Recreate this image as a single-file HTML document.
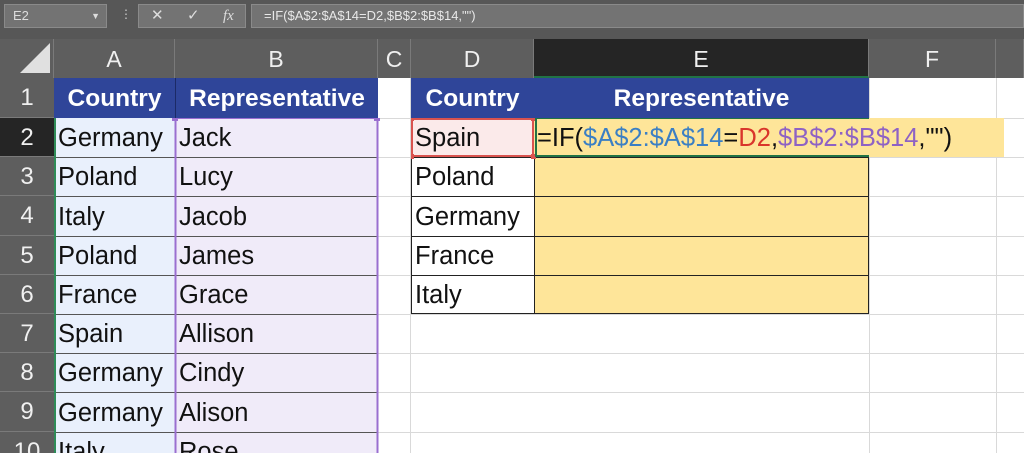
<!DOCTYPE html>
<html style="overflow:hidden;height:453px"><head><style>
*{margin:0;padding:0;box-sizing:border-box}
body{width:1024px;height:453px;overflow:hidden;background:#fff;font-family:"Liberation Sans",sans-serif;position:relative}
.a{position:absolute}
.t{font-size:25.5px;line-height:41px;padding-left:4px;color:#111;white-space:nowrap}
.ch{position:absolute;top:39px;height:39px;background:#5e5e5e;color:#f0f0f0;font-size:23px;text-align:center;line-height:41px;border-right:1px solid #7a7a7a}
.rh{position:absolute;left:0;width:54px;background:#5e5e5e;color:#f0f0f0;font-size:24px;text-align:center;line-height:39px;border-bottom:1px solid #7a7a7a}
.hd{background:#2f4599;color:#fff;font-weight:bold;text-align:center;font-size:24.5px;line-height:41px;white-space:nowrap}
</style></head><body>
<div class="a" style="left:0;top:0;width:1024px;height:39px;background:#575757"></div>
<div class="a" style="left:4px;top:4px;width:103px;height:24px;background:#737373;border:1px solid #8a8a8a;color:#ddd;font-size:13px;line-height:22px;padding-left:8px">E2<span style="position:absolute;right:6px;font-size:9px">▼</span></div>
<div class="a" style="left:120px;top:7px;color:#ccc;font-size:12px">⋮</div>
<div class="a" style="left:138px;top:4px;width:108px;height:24px;background:#737373;border:1px solid #8a8a8a;color:#ddd;font-size:15px;line-height:22px"><span style="position:absolute;left:12px">✕</span><span style="position:absolute;left:48px">✓</span><span style="position:absolute;left:84px;font-style:italic;font-family:'Liberation Serif',serif">fx</span></div>
<div class="a" style="left:251px;top:4px;width:773px;height:24px;background:#737373;border:1px solid #8a8a8a;color:#e8e8e8;font-size:13px;line-height:22px;padding-left:12px">=IF($A$2:$A$14=D2,$B$2:$B$14,"")</div>
<div class="ch" style="left:0;width:54px"><svg width="54" height="39"><polygon points="50,4 50,34 20,34" fill="#e0e0e0"/></svg></div>
<div class="ch" style="left:54px;width:121px">A</div>
<div class="ch" style="left:175px;width:203px">B</div>
<div class="ch" style="left:378px;width:33px">C</div>
<div class="ch" style="left:411px;width:123px">D</div>
<div class="ch" style="left:534px;width:335px;background:#252525;border-bottom:2px solid #217346">E</div>
<div class="ch" style="left:869px;width:127px">F</div>
<div class="ch" style="left:996px;width:28px"></div>
<div class="rh" style="top:78px;height:40px">1</div>
<div class="rh" style="top:118px;height:39px;background:#252525">2</div>
<div class="rh" style="top:157px;height:39px">3</div>
<div class="rh" style="top:196px;height:40px">4</div>
<div class="rh" style="top:236px;height:39px">5</div>
<div class="rh" style="top:275px;height:39px">6</div>
<div class="rh" style="top:314px;height:39px">7</div>
<div class="rh" style="top:353px;height:39px">8</div>
<div class="rh" style="top:392px;height:40px">9</div>
<div class="rh" style="top:432px;height:21px;border-bottom:none">10</div>
<svg class="a" style="left:54px;top:78px" width="970" height="375">
<g stroke="#d9d9d9" stroke-width="1">
<line x1="0" y1="40.5" x2="970" y2="40.5"/><line x1="0" y1="79.5" x2="970" y2="79.5"/><line x1="0" y1="118.5" x2="970" y2="118.5"/><line x1="0" y1="158.5" x2="970" y2="158.5"/><line x1="0" y1="197.5" x2="970" y2="197.5"/><line x1="0" y1="236.5" x2="970" y2="236.5"/><line x1="0" y1="275.5" x2="970" y2="275.5"/><line x1="0" y1="314.5" x2="970" y2="314.5"/><line x1="0" y1="354.5" x2="970" y2="354.5"/>
<line x1="356.5" y1="0" x2="356.5" y2="375"/><line x1="815.5" y1="0" x2="815.5" y2="375"/><line x1="942.5" y1="0" x2="942.5" y2="375"/>
</g></svg>
<div class="a" style="left:54px;top:118px;width:121px;height:335px;background:#e9f0fc"></div>
<div class="a" style="left:175px;top:118px;width:203px;height:335px;background:#f0ebf9"></div>
<div class="a hd" style="left:54px;top:78px;width:121px;height:40px">Country</div>
<div class="a hd" style="left:175px;top:78px;width:203px;height:40px;border-left:1px solid #1c2a66">Representative</div>
<svg class="a" style="left:54px;top:118px" width="330" height="335">
<g stroke="#555" stroke-width="1">
<line x1="0" y1="39.5" x2="324" y2="39.5"/><line x1="0" y1="78.5" x2="324" y2="78.5"/><line x1="0" y1="118.5" x2="324" y2="118.5"/><line x1="0" y1="157.5" x2="324" y2="157.5"/><line x1="0" y1="196.5" x2="324" y2="196.5"/><line x1="0" y1="235.5" x2="324" y2="235.5"/><line x1="0" y1="274.5" x2="324" y2="274.5"/><line x1="0" y1="314.5" x2="324" y2="314.5"/>
</g>
<line x1="121.5" y1="0" x2="121.5" y2="335" stroke="#9a6fd0" stroke-width="2"/>
<line x1="323.5" y1="0" x2="323.5" y2="335" stroke="#9a6fd0" stroke-width="2"/>
<line x1="121" y1="0" x2="324" y2="0" stroke="#9a6fd0" stroke-width="2"/>
<line x1="1" y1="0" x2="1" y2="335" stroke="#2e8b57" stroke-width="2"/>
<rect x="118" y="-3" width="6" height="6" fill="#9a6fd0"/><rect x="320" y="-3" width="6" height="6" fill="#9a6fd0"/>
</svg>
<div class="a t" style="left:54px;top:118px">Germany</div><div class="a t" style="left:175px;top:118px">Jack</div>
<div class="a t" style="left:54px;top:157px">Poland</div><div class="a t" style="left:175px;top:157px">Lucy</div>
<div class="a t" style="left:54px;top:197px">Italy</div><div class="a t" style="left:175px;top:197px">Jacob</div>
<div class="a t" style="left:54px;top:236px">Poland</div><div class="a t" style="left:175px;top:236px">James</div>
<div class="a t" style="left:54px;top:275px">France</div><div class="a t" style="left:175px;top:275px">Grace</div>
<div class="a t" style="left:54px;top:314px">Spain</div><div class="a t" style="left:175px;top:314px">Allison</div>
<div class="a t" style="left:54px;top:353px">Germany</div><div class="a t" style="left:175px;top:353px">Cindy</div>
<div class="a t" style="left:54px;top:393px">Germany</div><div class="a t" style="left:175px;top:393px">Alison</div>
<div class="a t" style="left:54px;top:432px">Italy</div><div class="a t" style="left:175px;top:432px">Rose</div>
<div class="a hd" style="left:411px;top:78px;width:123px;height:40px">Country</div>
<div class="a hd" style="left:534px;top:78px;width:335px;height:40px">Representative</div>
<div class="a" style="left:411px;top:118px;width:123px;height:39px;background:#fbeaea"></div>
<div class="a" style="left:534px;top:118px;width:470px;height:39px;background:#fee599"></div>
<div class="a" style="left:534px;top:157px;width:335px;height:157px;background:#fee599"></div>
<svg class="a" style="left:411px;top:118px" width="470" height="200">
<g stroke="#222" stroke-width="1">
<line x1="0" y1="39.5" x2="458" y2="39.5"/><line x1="0" y1="78.5" x2="458" y2="78.5"/><line x1="0" y1="118.5" x2="458" y2="118.5"/><line x1="0" y1="157.5" x2="458" y2="157.5"/><line x1="0" y1="195.5" x2="458" y2="195.5"/>
<line x1="0.5" y1="39" x2="0.5" y2="196"/><line x1="123.5" y1="39" x2="123.5" y2="196"/><line x1="457.5" y1="39" x2="457.5" y2="196"/>
</g>
<rect x="1" y="1" width="121" height="37" fill="none" stroke="#d9534f" stroke-width="2"/>
<rect x="-2" y="-2" width="5" height="5" fill="#d9534f"/><rect x="120" y="-2" width="5" height="5" fill="#d9534f"/><rect x="-2" y="36" width="5" height="5" fill="#d9534f"/><rect x="120" y="36" width="5" height="5" fill="#d9534f"/>
<line x1="124" y1="0" x2="458" y2="0" stroke="#217346" stroke-width="2"/><line x1="124" y1="38" x2="458" y2="38" stroke="#217346" stroke-width="2"/><line x1="125" y1="0" x2="125" y2="39" stroke="#217346" stroke-width="2"/>
</svg>
<div class="a t" style="left:411px;top:118px">Spain</div>
<div class="a t" style="left:411px;top:157px">Poland</div>
<div class="a t" style="left:411px;top:197px">Germany</div>
<div class="a t" style="left:411px;top:236px">France</div>
<div class="a t" style="left:411px;top:275px">Italy</div>
<div class="a t" style="left:533px;top:118px">=IF(<span style="color:#3b7fc4">$A$2:$A$14</span>=<span style="color:#d9352b">D2</span>,<span style="color:#8e62c4">$B$2:$B$14</span>,"")</div>
</body></html>
